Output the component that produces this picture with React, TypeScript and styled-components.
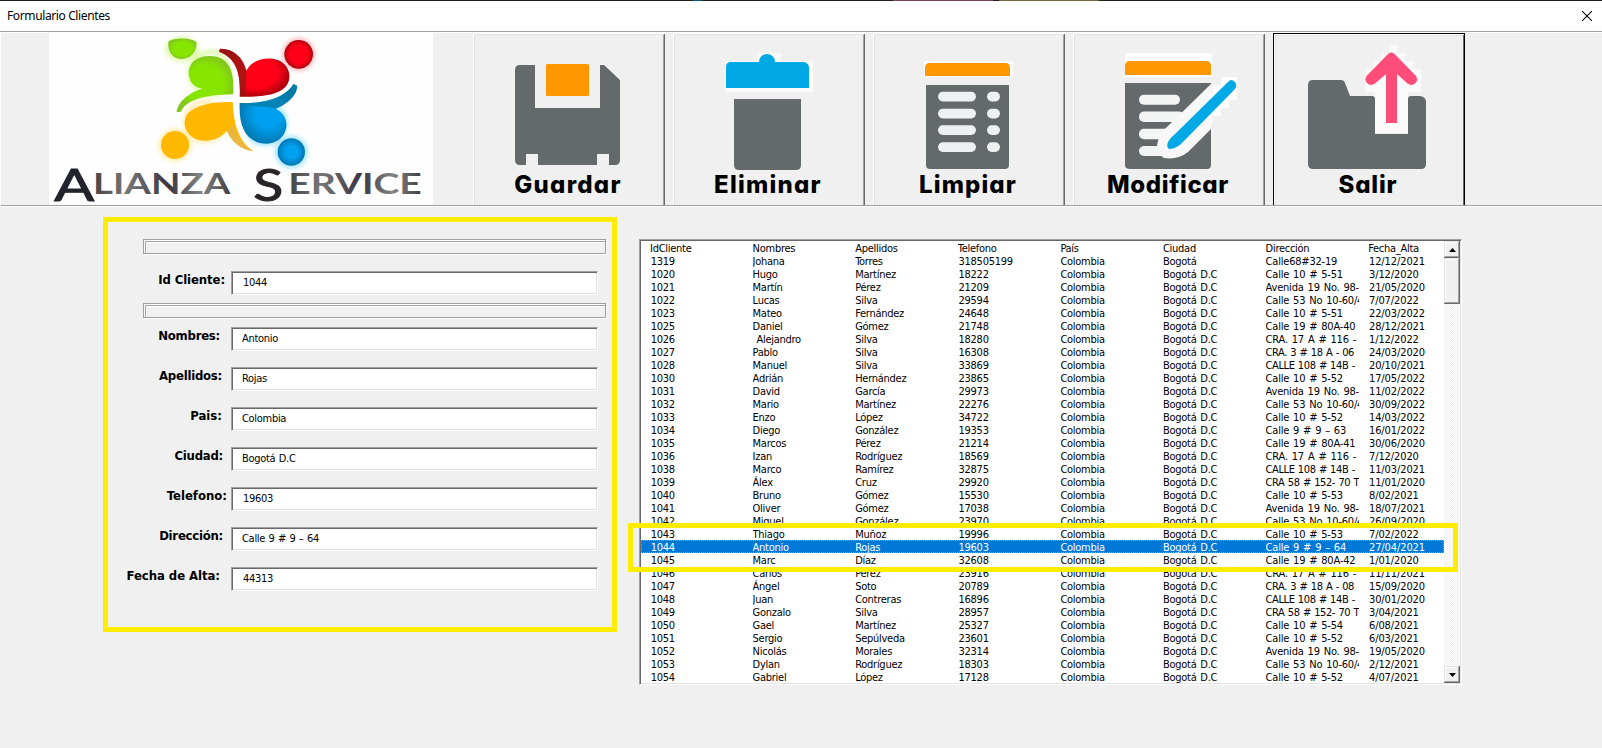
import React from "react";
import styled, { createGlobalStyle, css } from "styled-components";

const YELLOW = "#ffed00";
const FACE = "#f0f0f0";
const SLATE = "#646a6b";
const ORANGE = "#ff9800";
const BLUE = "#00a9e5";

const GlobalStyle = createGlobalStyle`
  * { box-sizing: border-box; }
  body { margin: 0; background: ${FACE}; overflow: hidden; }
`;

const Window = styled.main`
  width: 1602px;
  height: 748px;
  background: ${FACE};
  font-family: "DejaVu Sans Condensed", "DejaVu Sans", sans-serif;
  font-stretch: condensed;
  font-size: 11px;
  color: #000;
  overflow: hidden;
`;

const TopEdge = styled.div`
  height: 1px;
  background: linear-gradient(
    90deg,
    #231f20 693px, #005f80 693px 702px, #231f20 702px 893px, #7d4552 893px 993px,
    #231f20 993px 999px, #75653f 999px 1099px, #231f20 1099px
  );
`;

const TitleBar = styled.header`
  display: flex;
  justify-content: space-between;
  align-items: center;
  height: 31px;
  padding: 0 10px 0 7px;
  background: #fff;
  border-bottom: 1px solid #a0a0a0;
  font: 12px/16px "Noto Sans", "Open Sans", sans-serif;
  letter-spacing: -0.38px;
`;

const CloseButton = styled.button`
  display: flex;
  padding: 0;
  border: 0;
  background: none;
`;

const Toolbar = styled.nav`
  display: flex;
  height: 175px;
  border-top: 1px solid #fff;
  border-left: 1px solid #fff;
  border-bottom: 1px solid #fff;
  box-shadow: inset 0 -1px 0 #a0a0a0;
  padding: 0 0 1px 48px;
`;

const LogoBox = styled.div`
  width: 384px;
  height: 172px;
  margin-right: 40px;
  background: #fefefe;
`;

const LogoArt = styled.svg`
  display: block;
  overflow: visible;
`;

const ToolButton = styled.button<{ $focused?: boolean }>`
  display: flex;
  flex-direction: column;
  align-items: center;
  width: 192px;
  height: 172px;
  margin-right: 8px;
  padding: 0;
  border: 0;
  background: ${FACE};
  overflow: hidden;
  ${(p) =>
    p.$focused
      ? css`box-shadow: inset 1px 1px 0 #000, inset -1px 0 0 #000, inset 2px 2px 0 #fff,
          inset -2px 0 0 #696969, inset 3px 3px 0 #e3e3e3;`
      : css`box-shadow: inset 1px 1px 0 #fff, inset -1px 0 0 #696969, inset 2px 2px 0 #e3e3e3,
          inset -2px 0 0 #a0a0a0;`}
`;

const ToolIcon = styled.svg`
  display: block;
  flex: none;
`;

const ToolLabel = styled.span<{ $spacing: number }>`
  font: 800 24px/28px Inter, "Open Sans", sans-serif;
  font-feature-settings: "cv11" 1;
  letter-spacing: ${(p) => p.$spacing}px;
  margin-top: -1px;
  padding-right: 2px;
`;

const Content = styled.div`
  display: flex;
  align-items: flex-start;
  padding: 10px 0 0 103px;
`;

const FormPanel = styled.form`
  width: 514px;
  height: 415px;
  margin-right: 22px;
  padding: 17px 0 0 35px;
  border: 5px solid ${YELLOW};
`;

const Groove = styled.div<{ $after: number }>`
  width: 463px;
  height: 15px;
  margin-bottom: ${(p) => p.$after}px;
  border: 1px solid #a0a0a0;
  box-shadow: 1px 1px 0 #fff, inset 1px 1px 0 #fff, inset 2px 2px 0 #a0a0a0, inset 3px 3px 0 #fff;
`;

const Field = styled.label<{ $after: number }>`
  display: flex;
  height: 24px;
  margin: 0 0 ${(p) => p.$after}px -35px;
`;

const Caption = styled.span<{ $inset: number; $spacing?: number }>`
  width: 123px;
  padding-right: ${(p) => p.$inset}px;
  text-align: right;
  white-space: nowrap;
  font-weight: 700;
  font-size: 13px;
  line-height: 17px;
  letter-spacing: ${(p) => p.$spacing ?? -0.25}px;
`;

const Input = styled.input<{ $numeric?: boolean }>`
  width: 367px;
  height: 24px;
  padding: 0 0 1px ${(p) => (p.$numeric ? 11 : 10)}px;
  border: 1px solid;
  border-color: #a0a0a0 #fff #fff #a0a0a0;
  border-radius: 0;
  outline: none;
  box-shadow: inset 1px 1px 0 #696969, inset -1px -1px 0 #e3e3e3;
  background: #fff;
  color: #000;
  font: inherit;
  letter-spacing: -0.3px;
  word-spacing: 0.6px;
`;

const ListArea = styled.section`
  position: relative;
  margin-top: 22px;
`;

const ListBox = styled.div`
  display: flex;
  width: 823px;
  height: 446px;
  padding: 1px;
  border: 1px solid;
  border-color: #a0a0a0 #fff #fff #a0a0a0;
  box-shadow: inset 1px 1px 0 #696969, inset -1px -1px 0 #e3e3e3;
  background: #fff;
`;

const Rows = styled.div`
  width: 803px;
`;

const Row = styled.div<{ $selected?: boolean }>`
  display: grid;
  grid-template-columns: repeat(8, 93.8px);
  column-gap: 8.8px;
  height: 13px;
  padding-left: 9px;
  line-height: 16px;
  ${(p) =>
    p.$selected &&
    css`
      background: #0078d7;
      color: #fff;
      outline: 1px dotted #ff8728;
      outline-offset: -1px;
    `}
`;

type Kind = "text" | "digits" | "date" | "address" | "road";

const tracking: Record<Kind, number> = {
  text: -0.27,
  digits: -0.28,
  date: -0.1,
  address: -0.2,
  road: -0.4,
};

const Cell = styled.span<{ $kind?: Kind }>`
  height: 13px;
  overflow-x: clip;
  white-space: pre;
  word-spacing: ${(p) => (p.$kind === "road" ? 0.6 : 1)}px;
  padding-left: ${(p) => (p.$kind === "digits" || p.$kind === "date" ? 0.8 : 0)}px;
  letter-spacing: ${(p) => tracking[p.$kind ?? "text"]}px;
`;

const ScrollBar = styled.div`
  display: flex;
  flex-direction: column;
  width: 17px;
  background: repeating-conic-gradient(#fff 0 25%, #f0f0f0 0 50%) 0 0 / 2px 2px;
`;

const ScrollPart = styled.div<{ $height: number; $last?: boolean }>`
  display: flex;
  align-items: center;
  justify-content: center;
  height: ${(p) => p.$height}px;
  margin-top: ${(p) => (p.$last ? "auto" : "0")};
  background: ${FACE};
  box-shadow: inset -1px -1px 0 #696969, inset 1px 1px 0 #e3e3e3, inset -2px -2px 0 #a0a0a0,
    inset 2px 2px 0 #fff;
`;

const Highlight = styled.div`
  position: absolute;
  left: -11px;
  top: 284px;
  width: 830px;
  height: 49px;
  border: 5px solid ${YELLOW};
  pointer-events: none;
`;

function Logo() {
  return (
    <LogoArt width="384" height="172" viewBox="147 99 1152 516" aria-label="Alianza Service">
      <defs>
        <radialGradient id="red"><stop offset="0.65" stopColor="#ff0018" /><stop offset="1" stopColor="#b0000c" /></radialGradient>
        <radialGradient id="green"><stop offset="0.65" stopColor="#86e600" /><stop offset="1" stopColor="#83c81c" /></radialGradient>
        <radialGradient id="blue"><stop offset="0.45" stopColor="#00a0f0" /><stop offset="1" stopColor="#0079b2" /></radialGradient>
        <linearGradient id="ink" x1="0" x2="1" y1="0" y2="0">
          <stop offset="0" stopColor="#444" /><stop offset="0.25" stopColor="#777" />
          <stop offset="0.55" stopColor="#39333f" /><stop offset="0.78" stopColor="#858585" />
          <stop offset="1" stopColor="#3f3f3f" />
        </linearGradient>
        <filter id="glow" x="-10%" y="-10%" width="120%" height="120%"><feGaussianBlur stdDeviation="7" /></filter>
      </defs>
      <g fill="none" strokeWidth="14" filter="url(#glow)" opacity="0.6">
        <ellipse cx="546" cy="147" rx="43" ry="30" stroke="#c8f56c" />
        <circle cx="635" cy="220" r="64" stroke="#c8f56c" />
        <circle cx="896" cy="163" r="42" stroke="#ff8890" />
        <circle cx="525" cy="435" r="42" stroke="#ffdf75" />
        <circle cx="615" cy="365" r="58" stroke="#ffdf75" />
        <circle cx="874" cy="456" r="42" stroke="#60d6ff" />
        <circle cx="795" cy="370" r="60" stroke="#60d6ff" />
      </g>
      <path d="M505 125C520 112 575 112 590 127C590 160 570 176 546 177C520 177 502 157 505 125Z" fill="url(#green)" />
      <circle cx="896" cy="163" r="43" fill="url(#red)" />
      <circle cx="525" cy="435" r="42" fill="#ffb800" />
      <circle cx="874" cy="456" r="41" fill="url(#blue)" />
      <path d="M657 148C704 152 712 220 719 298C776 302 850 294 886 254L900 262C875 310 800 322 716 314C714 380 724 432 762 456" fill="none" stroke="#fff" strokeWidth="20" />
      <path d="M700 283C703 220 692 166 626 168C580 169 562 200 567 228C572 255 590 263 607 266C570 276 532 305 530 337L543 335C557 305 600 284 700 283Z" fill="url(#green)" />
      <path d="M719 290C722 225 712 175 657 155L660 146C702 146 729 173 739 212C754 183 786 172 819 176C858 182 873 213 867 240C858 279 806 292 719 290Z" fill="url(#red)" />
      <path d="M720 288C722 225 712 175 657 155L660 146C702 146 729 173 739 212L737 285Z" fill="#921a12" opacity="0.75" />
      <path d="M698 306C640 305 580 314 559 347C545 377 561 413 602 421C638 426 666 410 681 393C692 420 720 449 760 454C724 429 702 390 698 306Z" fill="#ffb800" />
      <path d="M681 393C692 420 720 449 760 454C724 429 709 407 700 374Z" fill="#e9b740" />
      <path d="M719 309C776 312 854 299 880 252L891 257C893 287 855 316 827 326C852 337 864 363 858 387C850 420 817 436 784 430C733 419 716 373 719 309Z" fill="url(#blue)" />
      <path d="M721 309C776 312 854 299 880 252L891 257C893 287 855 316 827 326C790 318 755 322 721 309Z" fill="#007ba3" opacity="0.75" />
      <g fill="url(#ink)" fontFamily="Lato, 'Open Sans', sans-serif">
        <text x="163" y="604" fontSize="136" fontWeight="400" fill="#23232d" stroke="#23232d" strokeWidth="3" textLength="120" lengthAdjust="spacingAndGlyphs">A</text>
        <text x="279" y="583" fontSize="84" fontWeight="700" textLength="412" lengthAdjust="spacingAndGlyphs">LIANZA</text>
        <text x="760" y="604" fontSize="136" fontWeight="400" fill="#292427" stroke="#292427" strokeWidth="3" textLength="90" lengthAdjust="spacingAndGlyphs">S</text>
        <text x="865" y="583" fontSize="84" fontWeight="700" textLength="400" lengthAdjust="spacingAndGlyphs">ERVICE</text>
      </g>
    </LogoArt>
  );
}

function SaveIcon() {
  return (
    <>
      <path d="M47 32H62V75H127V32H131L147 47V127Q147 132 142 132H136V121H124V132H65V121H53V132H47Q42 132 42 127V37Q42 32 47 32Z" fill={SLATE} />
      <rect x="73" y="31" width="43" height="32" rx="1.5" fill={ORANGE} />
    </>
  );
}

function DeleteIcon() {
  return (
    <>
      <path d="M84 20H108V28H140V59H52V28H84Z" fill="#fafafa" />
      <path d="M53 55V34Q53 29 58 29H86A8 8 0 0 1 102 29H131Q136 30 136 35V55Z" fill={BLUE} />
      <path d="M61 66H128V132Q128 137 123 137H66Q61 137 61 132Z" fill={SLATE} />
    </>
  );
}

function ClearIcon() {
  return (
    <>
      <rect x="51" y="28" width="89" height="16" fill="#fafafa" />
      <path d="M52 43V35Q52 30 57 30H132Q137 30 137 35V43Z" fill={ORANGE} />
      <path d="M53 52H136V132Q136 136 132 136H57Q53 136 53 132Z" fill={SLATE} />
      {[59, 76, 92.5, 109.5].map((y) => (
        <g key={y} fill="#eef1f1">
          <rect x="65" y={y - 0.2} width="38" height="9.6" rx="4.8" />
          <rect x="114" y={y - 0.2} width="13" height="9.6" rx="4.8" />
        </g>
      ))}
    </>
  );
}

function EditIcon() {
  return (
    <>
      <path d="M52 20H139V44H52ZM148 44H164V67H156V75H148V83H139V92H130V60H139V52H148Z" fill="#fcfcfc" />
      <path d="M52 42V33Q52 28 57 28H133Q138 28 138 33V42Z" fill={ORANGE} />
      <path d="M52 50H138V132Q138 136 134 136H57Q52 136 52 132Z" fill={SLATE} />
      <g fill="#f3f4f4">
        <rect x="66" y="61.7" width="41" height="10" rx="5" />
        <rect x="66" y="78.5" width="45" height="10.5" rx="5" />
        <rect x="66" y="95.7" width="36" height="10.5" rx="5" />
        <rect x="66" y="113" width="30" height="10" rx="5" />
      </g>
      <path d="M138 51V96L115 119Q105 127 91 125Q86 122 89 119Q82 116 85 108Q87 99 94 94Z" fill="#f8f8f8" />
      <path d="M155 49Q158 45 162 49Q165 53 161 57L108 111Q102 116 96 116Q93 114 95 109Q97 105 101 102Z" fill={BLUE} />
    </>
  );
}

function ExitIcon() {
  return (
    <>
      <path d="M116 12H124V20H132V28H140V36H148V59H135V100H102V59H92V36H100V28H108V20H116Z" fill="#fafafa" />
      <path d="M40 47H68Q71 47 72 50L77 63H99Q102 63 102 66V101H135V66Q135 63 138 63H147Q153 64 153 69V131Q153 136 148 136H40Q35 136 35 131V52Q35 47 40 47Z" fill={SLATE} />
      <path d="M114.500 21.500Q118.300 17.500 122.100 21.500L143 43Q145.500 47 142.500 50Q139 53.500 134.500 50.500L124 41V90H113V41L102 50.500Q97.500 53.500 94 50Q91 47 93.500 43Z" fill="#ff4d79" />
    </>
  );
}

const tools = [
  { label: "Guardar", icon: <SaveIcon />, spacing: 1.25 },
  { label: "Eliminar", icon: <DeleteIcon />, spacing: 1.25 },
  { label: "Limpiar", icon: <ClearIcon />, spacing: 1.1 },
  { label: "Modificar", icon: <EditIcon />, spacing: 0.65 },
  { label: "Salir", icon: <ExitIcon />, spacing: 0.8 },
];

const fields = [
  { label: "Nombres:", value: "Antonio", inset: 11 },
  { label: "Apellidos:", value: "Rojas", inset: 9 },
  { label: "Pais:", value: "Colombia", inset: 9, spacing: 0 },
  { label: "Ciudad:", value: "Bogotá D.C", inset: 8 },
  { label: "Telefono:", value: "19603", inset: 4, spacing: 0 },
  { label: "Dirección:", value: "Calle 9 # 9 – 64", inset: 8 },
  { label: "Fecha de Alta:", value: "44313", inset: 11, spacing: -0.05 },
];

const columns = ["IdCliente", "Nombres", "Apellidos", "Telefono", "País", "Ciudad", "Dirección", "Fecha_Alta"];

const AV = "Avenida 19 No. 98-";
const C53 = "Calle 53 No 10-60/46";
const CRA17 = "CRA. 17 A # 116 - 22";
const CALLE108 = "CALLE 108 # 14B - ";
const CRA58 = "CRA 58 # 152- 70 T";

const clients: string[][] = [
  ["1319", "Johana", "Torres", "318505199", "Calle68#32-19", "12/12/2021"],
  ["1020", "Hugo", "Martínez", "18222", "Calle 10 # 5-51", "3/12/2020"],
  ["1021", "Martín", "Pérez", "21209", AV, "21/05/2020"],
  ["1022", "Lucas", "Silva", "29594", C53, "7/07/2022"],
  ["1023", "Mateo", "Fernández", "24648", "Calle 10 # 5-51", "22/03/2022"],
  ["1025", "Daniel", "Gómez", "21748", "Calle 19 # 80A-40", "28/12/2021"],
  ["1026", " Alejandro", "Silva", "18280", CRA17, "1/12/2022"],
  ["1027", "Pablo", "Silva", "16308", "CRA. 3 # 18 A - 06", "24/03/2020"],
  ["1028", "Manuel", "Silva", "33869", CALLE108, "20/10/2021"],
  ["1030", "Adrián", "Hernández", "23865", "Calle 10 # 5-52", "17/05/2022"],
  ["1031", "David", "García", "29973", AV, "11/02/2022"],
  ["1032", "Mario", "Martínez", "22276", C53, "30/09/2022"],
  ["1033", "Enzo", "López", "34722", "Calle 10 # 5-52", "14/03/2022"],
  ["1034", "Diego", "González", "19353", "Calle 9 # 9 – 63", "16/01/2022"],
  ["1035", "Marcos", "Pérez", "21214", "Calle 19 # 80A-41", "30/06/2020"],
  ["1036", "Izan", "Rodríguez", "18569", CRA17, "7/12/2020"],
  ["1038", "Marco", "Ramírez", "32875", CALLE108, "11/03/2021"],
  ["1039", "Álex", "Cruz", "29920", CRA58, "11/01/2020"],
  ["1040", "Bruno", "Gómez", "15530", "Calle 10 # 5-53", "8/02/2021"],
  ["1041", "Oliver", "Gómez", "17038", AV, "18/07/2021"],
  ["1042", "Miguel", "González", "23970", C53, "26/09/2020"],
  ["1043", "Thiago", "Muñoz", "19996", "Calle 10 # 5-53", "7/02/2022"],
  ["1044", "Antonio", "Rojas", "19603", "Calle 9 # 9 – 64", "27/04/2021"],
  ["1045", "Marc", "Díaz", "32608", "Calle 19 # 80A-42", "1/01/2020"],
  ["1046", "Carlos", "Pérez", "23916", CRA17, "11/11/2021"],
  ["1047", "Ángel", "Soto", "20789", "CRA. 3 # 18 A - 08", "15/09/2020"],
  ["1048", "Juan", "Contreras", "16896", CALLE108, "30/01/2020"],
  ["1049", "Gonzalo", "Silva", "28957", CRA58, "3/04/2021"],
  ["1050", "Gael", "Martínez", "25327", "Calle 10 # 5-54", "6/08/2021"],
  ["1051", "Sergio", "Sepúlveda", "23601", "Calle 10 # 5-52", "6/03/2021"],
  ["1052", "Nicolás", "Morales", "32314", AV, "19/05/2020"],
  ["1053", "Dylan", "Rodríguez", "18303", C53, "2/12/2021"],
  ["1054", "Gabriel", "López", "17128", "Calle 10 # 5-52", "4/07/2021"],
];

export default function App() {
  return (
    <Window>
      <GlobalStyle />
      <TopEdge />
      <TitleBar>
        <span>Formulario Clientes</span>
        <CloseButton aria-label="Cerrar">
          <svg width="10" height="10" viewBox="0 0 10 10" stroke="#000" strokeWidth="1.1">
            <path d="M0 0L10 10M10 0L0 10" />
          </svg>
        </CloseButton>
      </TitleBar>
      <Toolbar>
        <LogoBox><Logo /></LogoBox>
        {tools.map((t) => (
          <ToolButton key={t.label} $focused={t.label === "Salir"}>
            <ToolIcon width="192" height="139" viewBox="0 0 192 139">{t.icon}</ToolIcon>
            <ToolLabel $spacing={t.spacing}>{t.label}</ToolLabel>
          </ToolButton>
        ))}
      </Toolbar>
      <Content>
        <FormPanel>
          <Groove $after={17} />
          <Field $after={8}>
            <Caption $inset={6} $spacing={-0.1}>Id Cliente:</Caption>
            <Input $numeric defaultValue="1044" />
          </Field>
          <Groove $after={9} />
          {fields.map((f) => (
            <Field key={f.label} $after={16}>
              <Caption $inset={f.inset} $spacing={f.spacing}>{f.label}</Caption>
              <Input $numeric={/^\d/.test(f.value)} defaultValue={f.value} />
            </Field>
          ))}
        </FormPanel>
        <ListArea>
          <ListBox>
            <Rows>
              <Row>{columns.map((c) => <Cell key={c}>{c}</Cell>)}</Row>
              {clients.map(([id, name, surname, phone, address, date], i) => (
                <Row key={id} $selected={id === "1044"}>
                  <Cell $kind="digits">{id}</Cell>
                  <Cell>{name}</Cell>
                  <Cell>{surname}</Cell>
                  <Cell $kind="digits">{phone}</Cell>
                  <Cell>Colombia</Cell>
                  <Cell>{i === 0 ? "Bogotá" : "Bogotá D.C"}</Cell>
                  <Cell $kind={/^(CRA 58|CRA. 3|CALLE)/.test(address) ? "road" : "address"}>{address}</Cell>
                  <Cell $kind="date">{date}</Cell>
                </Row>
              ))}
            </Rows>
            <ScrollBar>
              <ScrollPart $height={17}>
                <svg width="7" height="4" viewBox="0 0 7 4"><path d="M0 4L3.500 0L7 4Z" /></svg>
              </ScrollPart>
              <ScrollPart $height={46} />
              <ScrollPart $height={17} $last>
                <svg width="7" height="4" viewBox="0 0 7 4"><path d="M0 0L3.500 4L7 0Z" /></svg>
              </ScrollPart>
            </ScrollBar>
          </ListBox>
          <Highlight />
        </ListArea>
      </Content>
    </Window>
  );
}
